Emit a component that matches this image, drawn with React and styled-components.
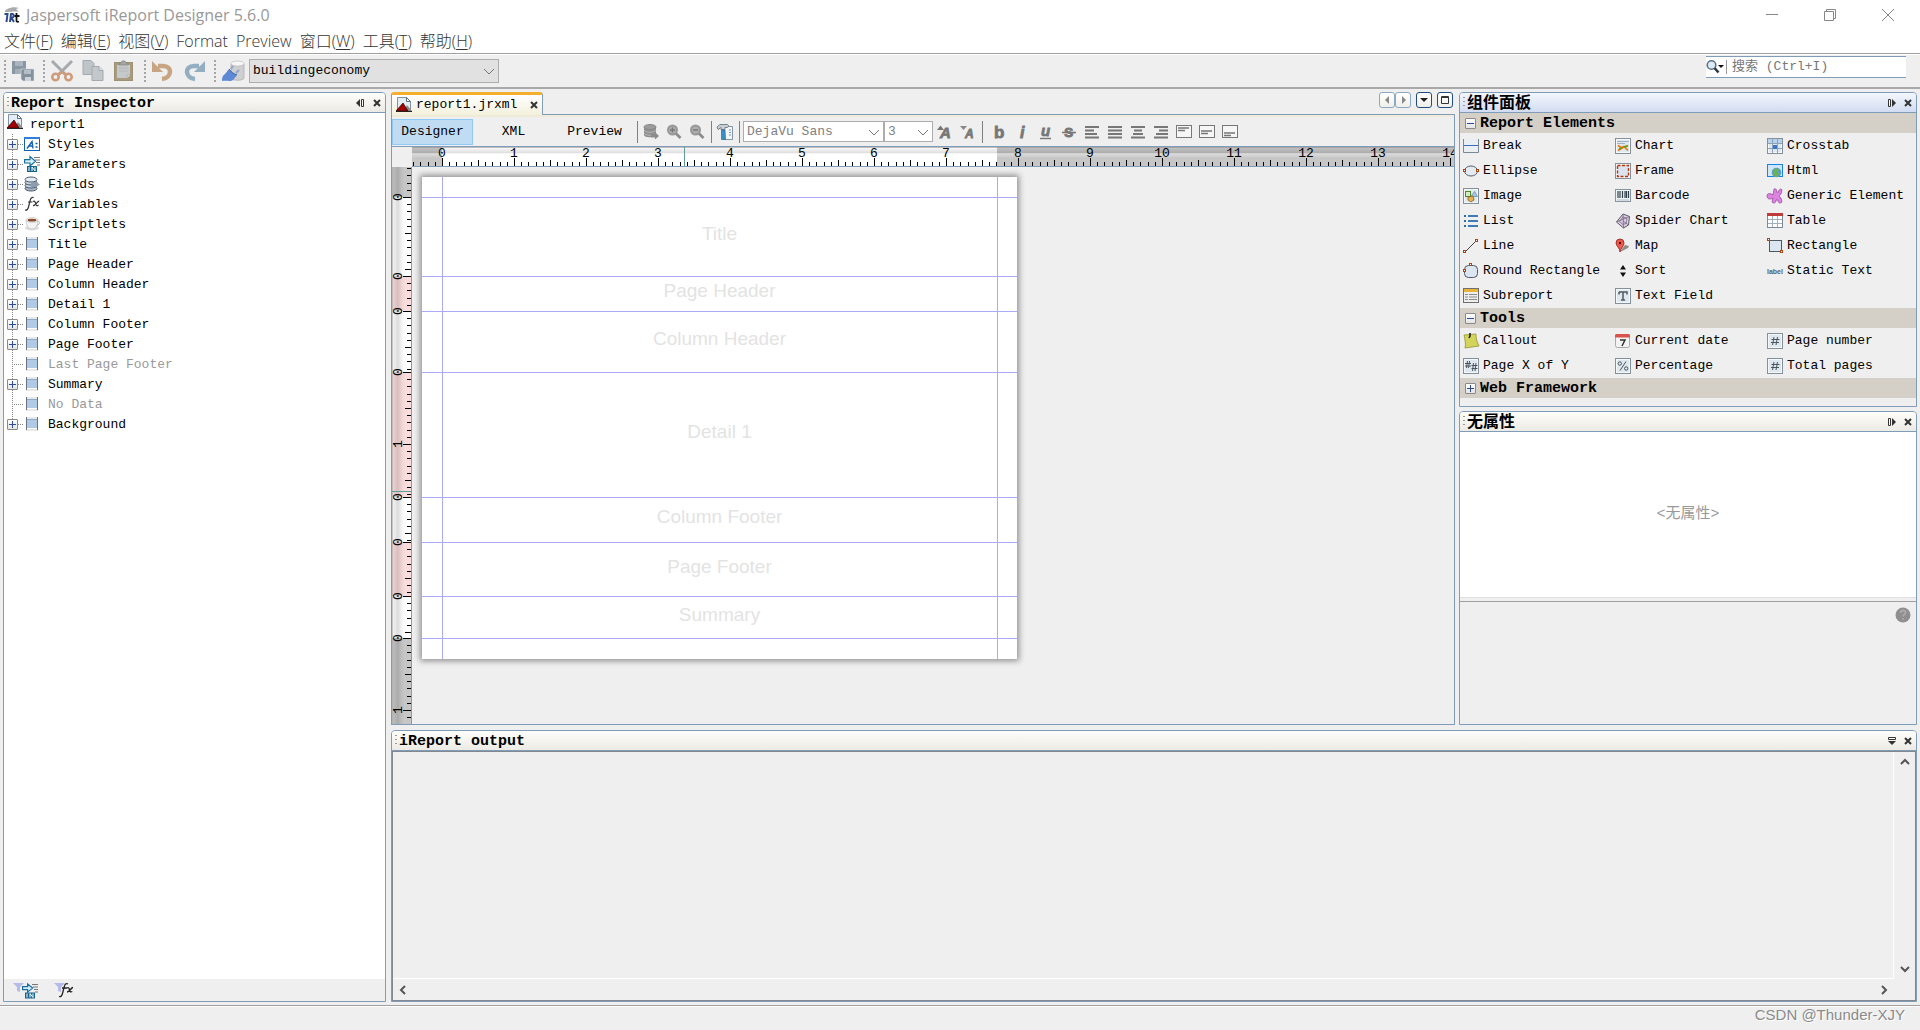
import React, { useEffect, useRef, useState } from 'react'
import styled, { createGlobalStyle, css } from 'styled-components'

const mono = `'Liberation Mono', 'Noto Sans CJK SC', monospace`
const ui = `'Open Sans', 'Noto Sans CJK SC', sans-serif`

const tile = (
  <>
    <rect x='0.5' y='0.5' width='15' height='15' fill='#dfe7ef' stroke='#84909c' />
    <rect x='1.5' y='1.5' width='13' height='13' fill='none' stroke='#f4f8fb' />
  </>
)
const handle = (x, y) => (
  <rect x={x + 0.5} y={y + 0.5} width='2' height='2' fill='#fff' stroke='#b0420c' />
)
const letter = (char, x, y, size, slant) => (
  <text
    x={x}
    y={y}
    fontSize={size}
    fontFamily='Liberation Sans'
    fontWeight='700'
    fontStyle={slant ? 'italic' : 'normal'}
    fill='#777'
    stroke='#777'
    strokeWidth='0.8'
  >
    {char}
  </text>
)

const icons = {
  report: (
    <>
      <path d='M1.5 0.5h9l4 4v10h-13z' fill='#e4edf5' stroke='#7f92a6' />
      <path d='M10.5 0.5v4h4z' fill='#fff' stroke='#5b6f84' />
      <path d='M8 14l3-6 5 6z' fill='#8b8b8b' />
      <path d='M0 14l7-8 5 8z' fill='#a30000' stroke='#1c0000' strokeWidth='0.7' />
      <path d='M0 14.5h16' stroke='#222' />
    </>
  ),
  styles: (
    <>
      <rect x='0.5' y='1.5' width='15' height='13' fill='#fff' stroke='#1160b8' />
      <rect x='0' y='1' width='16' height='2' fill='#2e80d8' />
      <path d='M3 12.500l5-7 1 7M4.500 10h4.500' fill='none' stroke='#0f5db0' strokeWidth='1.400' />
      <path d='M11.500 7.500h2M11.500 11h2' stroke='#0f5db0' strokeWidth='1.600' />
    </>
  ),
  params: (
    <>
      <path d='M10 1.500h6M11 4h5M12 6.500h4M13 9h3' stroke='#777' />
      <path d='M0.600 3.600h5.400v-3l5.500 4.700-5.500 4.700v-3h-5.400z' fill='#d5effc' stroke='#1a6e9e' strokeWidth='1.200' />
      <rect x='3' y='10' width='10' height='6' fill='#15648f' />
      <path d='M5 11v4M8 15v-4l3 4v-4' fill='none' stroke='#fff' />
    </>
  ),
  fields: (
    <>
      <ellipse cx='7' cy='12.500' rx='6' ry='2.500' fill='#a8b7c5' stroke='#4a5d70' />
      <ellipse cx='7' cy='9.500' rx='6' ry='2.500' fill='#c3cfda' stroke='#4a5d70' />
      <ellipse cx='7' cy='6.500' rx='6' ry='2.500' fill='#c3cfda' stroke='#4a5d70' />
      <ellipse cx='7' cy='3.500' rx='6' ry='2.500' fill='#e3eaf1' stroke='#4a5d70' />
      <path d='M7 6h5l4 2.500-4 2.500h-5' fill='#8c9dad' />
    </>
  ),
  fx: (
    <path
      d='M1 14c2 0.600 3-1 3.500-3l1.800-7c0.500-2.300 1.800-3 3.400-2.500M4 6h4.500M9 5.500c1.800-1 2.200 0.500 2.700 2.200s1 2.500 2.800 1.500M15.200 5.200c-2.200 0-3.200 4.500-6.200 4.500'
      fill='none'
      stroke='#333'
      strokeWidth='1.200'
    />
  ),
  cup: (
    <>
      <ellipse cx='8' cy='12' rx='7' ry='2.500' fill='#ddd' />
      <path d='M2 4c0 5 2 9 6 9s6-4 6-9z' fill='#f3f3f3' stroke='#bbb' strokeWidth='0.700' />
      <path d='M13.500 5c3 0 2.500 4-1 4.500' fill='none' stroke='#bbb' />
      <ellipse cx='8' cy='4' rx='6' ry='2.300' fill='#fff' stroke='#bbb' strokeWidth='0.700' />
      <ellipse cx='8' cy='4.200' rx='4.500' ry='1.400' fill='#8a4a2c' />
    </>
  ),
  band: (
    <>
      <rect x='2' y='1' width='12' height='14' fill='#e8e8e8' />
      <rect x='3' y='3' width='10' height='9' fill='#b0cae6' />
      <path d='M3 3.500h10' stroke='#8da9ca' />
      <path d='M3 12.500h10' stroke='#fff' />
      <path d='M2.500 1v13M13.500 1v13' stroke='#68717d' />
    </>
  ),
  break: (
    <>
      <path d='M0.500 1v13.500h15V1' fill='#e9eef3' stroke='#7b8794' />
      <path d='M1 7.500h14' stroke='#3a6cc0' />
    </>
  ),
  chart: (
    <>
      {tile}
      <path d='M2 3.500h12M2 5.500h8' stroke='#9fb2c4' />
      <path d='M3 7.500l3 2 3-1 4 4M3 12.500l5-3 5-2' fill='none' stroke='#e07a10' strokeWidth='1.600' />
      <path d='M4 11l3-1M9 9l4-1' stroke='#5aa515' strokeWidth='1.500' />
    </>
  ),
  crosstab: (
    <>
      {tile}
      <rect x='1' y='1' width='14' height='4' fill='#b8d2ee' />
      <path d='M1 5.500h14M1 10.500h14M5.500 1v14M10.500 1v14' stroke='#8fa3b8' />
      <rect x='6' y='7' width='4' height='4' fill='#3f74c4' />
    </>
  ),
  ellipse: (
    <>
      <ellipse cx='8' cy='8' rx='6.500' ry='5' fill='#e4ebf2' stroke='#555e68' />
      {handle(0, 6)}
      {handle(13, 6)}
    </>
  ),
  frame: (
    <>
      {tile}
      <rect x='2.500' y='2.500' width='11' height='11' fill='#d9e4ee' stroke='#c03408' strokeWidth='1.400' strokeDasharray='3 1.500' />
    </>
  ),
  html: (
    <>
      <rect x='0.500' y='1.500' width='15' height='12' fill='#cfe6f8' stroke='#1783e8' />
      <circle cx='9.500' cy='9.500' r='4.800' fill='#5f9ec4' />
      <path d='M6 8c2-3 5-3 6-1l-2 2 2 2-2 3c-3 0-3-2-4-3z' fill='#68b35a' />
    </>
  ),
  image: (
    <>
      {tile}
      <rect x='2.500' y='3.500' width='5' height='5' fill='#d9ebc6' stroke='#4c8a26' />
      <path d='M8 8.500l3.500-5 3 5z' fill='#a9c7e2' stroke='#5f86ab' strokeWidth='0.700' />
      <path d='M5 9l5-1 1 4-3 2-3-2z' fill='#e6b455' stroke='#7a5420' strokeWidth='0.700' />
    </>
  ),
  barcode: (
    <>
      <rect x='0.500' y='1.500' width='15' height='12' fill='#eef3f6' stroke='#86949f' />
      <path d='M3 3v7M5 3v7M7.500 3v7M10 3v7M11.500 3v7M13.500 3v7' stroke='#33414c' strokeWidth='1.200' />
      <path d='M2 12h12' stroke='#b5c0c9' />
    </>
  ),
  generic: (
    <path
      d='M7 1c2-1 3 1 2.500 3h2C12 1 14 0 15 2l-1 4c-2 1-2 3 0 4l1 4c-2 2-4 1-4-2H9c0 3-2 4-4 2l1-4c-3 2-6 1-6-2s3-3 6-1z'
      fill='#dc84e0'
      stroke='#8f3f97'
      strokeWidth='0.700'
    />
  ),
  list: (
    <>
      <path d='M1 3h2M1 8h2M1 13h2' stroke='#2f6aa5' strokeWidth='2' />
      <path d='M5 3h10M5 8h10M5 13h10' stroke='#3f7cb5' strokeWidth='2' />
    </>
  ),
  spider: (
    <>
      <path d='M8 1l6.500 2.500-1 8.500-5 3-7-6z' fill='#d9cfe0' stroke='#5d5a64' />
      <path d='M8 1l0.500 14M1.500 9l13-5.500M8 8l5.500 4M8 4l4 1.500-1 5-3 1-3.500-3z' fill='none' stroke='#7b6688' strokeWidth='0.800' />
    </>
  ),
  table: (
    <>
      <rect x='0.500' y='0.500' width='15' height='14' fill='#fff' stroke='#7d8a98' />
      <rect x='0' y='0' width='16' height='3' fill='#c03a3a' />
      <path d='M1 6.500h14M1 10.500h14M5.500 3v11M10.500 3v11' stroke='#9fb0c0' />
    </>
  ),
  line: (
    <>
      <path d='M2 14L14 2' stroke='#444' />
      {handle(0, 12)}
      {handle(12, 1)}
    </>
  ),
  map: (
    <>
      <path d='M5 14l5-7 4 1-1 2z' fill='#8c8c8c' />
      <path d='M5 14c0-4-4-6-4-9a4 4 0 0 1 8 0c0 3-3 5-4 9z' fill='#ee5a4c' stroke='#8e1d16' strokeWidth='0.800' />
      <circle cx='5' cy='5' r='1.200' fill='#5c0d0a' />
    </>
  ),
  rect: (
    <>
      <rect x='2.500' y='2.500' width='12' height='11' fill='#dbe6f0' stroke='#4d5863' />
      {handle(0, 0)}
      {handle(13, 12)}
    </>
  ),
  round: (
    <>
      <rect x='1.500' y='2.500' width='13' height='12' rx='4' fill='#dbe6f0' stroke='#4d5863' />
      {handle(0, 6)}
      {handle(6, 0)}
    </>
  ),
  sort: <path d='M5 6.500l3-4.500 3 4.500zM5 9.500h6l-3 4.500z' fill='#111' />,
  label: (
    <text x='0' y='11' fontSize='7' fontFamily='Liberation Sans' fontWeight='700' fill='#56606a'>
      label
    </text>
  ),
  subreport: (
    <>
      <rect x='0.500' y='0.500' width='15' height='14' fill='#eee' stroke='#6f6f6f' />
      <rect x='1' y='1' width='14' height='3' fill='#e8b438' />
      <path d='M2 6.500h3M6 6.500h8M2 9h3M6 9h8M2 11.500h3M6 11.500h8' stroke='#8a8a8a' />
    </>
  ),
  textfield: (
    <>
      {tile}
      <path d='M4 4h8v2.500M4 6.500V4M8 4v8M6 12h4' fill='none' stroke='#4e5a66' strokeWidth='1.500' />
    </>
  ),
  callout: (
    <>
      <path d='M1 2l12-1c0 5 1 8 3 12l-14 2c1-4 0-8-1-13z' fill='#d3d45c' stroke='#94952c' strokeWidth='0.800' />
      <path d='M7 0v3l-1 2' fill='none' stroke='#222' strokeWidth='1.600' />
    </>
  ),
  date: (
    <>
      <rect x='0.500' y='1.500' width='14' height='13' rx='2' fill='#f3f3f3' stroke='#aaa' />
      <path d='M0 4.500V3c0-2 1-2 2-2h11c1 0 2 0 2 2v1.500z' fill='#d9524c' />
      <path d='M5 7h5l-3 6' fill='none' stroke='#333' strokeWidth='1.500' />
    </>
  ),
  hash: (
    <>
      {tile}
      <path d='M7 4l-1.500 8M10.500 4L9 12M4.500 6.500h8M4 9.500h8' stroke='#4c565f' fill='none' />
    </>
  ),
  hashes: (
    <>
      {tile}
      <path d='M4.500 3l-1 7M6.500 3l-1 7M2 5.500h6M2 8h6M10.500 5l-1 8M13 5l-1 8M8.500 7.500h6M8.500 10.500h6' stroke='#4c565f' fill='none' />
    </>
  ),
  percent: (
    <>
      {tile}
      <path d='M11 3.500l-6 9' stroke='#4c565f' />
      <circle cx='4.800' cy='5.500' r='1.700' fill='none' stroke='#4c565f' />
      <circle cx='11.200' cy='10.500' r='1.700' fill='none' stroke='#4c565f' />
    </>
  ),
  app: (
    <>
      <path d='M1 4c2-3 9-5 14-3l-3 1 3 3c-4-1-8 0-14 0z' fill='#aaa' />
      <path d='M0.500 7h3l-1 8M6 15l1-8c3-1 4 3 0.500 4l2.500 4' fill='none' stroke='#2c4a8c' strokeWidth='2' />
      <path d='M12.500 6v7.500c0 1.500 1 1.500 2.500 1M10.500 9h5' fill='none' stroke='#111' strokeWidth='1.800' />
    </>
  ),
  filterParams: (
    <>
      <path d='M0 1h11l-4 4v5l-3-1V5z' fill='#b4bbea' />
      <g transform='translate(9 1)'>
        <path d='M10 1.500h6M11 4h5M12 6.500h4M13 9h3' stroke='#777' />
        <path d='M0.600 3.600h5v-2.500l5 4-5 4v-2.500h-5z' fill='#d5effc' stroke='#1a6e9e' strokeWidth='1.200' />
        <rect x='3' y='9.500' width='10' height='6' fill='#15648f' />
        <path d='M5 10.500v4M8 14.500v-4l3 4v-4' fill='none' stroke='#fff' />
      </g>
    </>
  ),
  filterFx: (
    <>
      <path d='M0 1h11l-4 4v5l-3-1V5z' fill='#b4bbea' />
      <path
        d='M5 14.500c2 0.600 3-1 3.500-3l1.800-7c0.500-2.300 1.800-3.500 3.700-2.500M8 6h5M13 6c1.800-1 2.200 0.500 2.500 2s1 2.500 2.800 1.500M19 5.500c-2.200 0-3 4.500-6 4.500'
        fill='none'
        stroke='#222'
        strokeWidth='1.300'
      />
    </>
  ),
  // main toolbar, drawn on a 22px grid
  saveAll: (
    <>
      <path d='M0 1h14v13H0z' fill='#8a97a3' />
      <path d='M3 1h8v5H3z' fill='#aab5bf' />
      <path d='M3 9h8v5H3z' fill='#a3aeb8' />
      <path d='M9 9h13v12H11l-2-2z' fill='#84919d' stroke='#dfe3e6' strokeWidth='0.600' />
      <path d='M12 10h7v4h-7z' fill='#b3bec7' />
      <path d='M13 17h6v4h-6z' fill='#cdd4d9' />
    </>
  ),
  cut: (
    <>
      <path d='M1 1l13 13M21 1L8 14' stroke='#a5aaae' strokeWidth='3' />
      <circle cx='4.500' cy='17' r='3.200' fill='none' stroke='#cd9c7d' strokeWidth='2.600' />
      <circle cx='17.500' cy='17' r='3.200' fill='none' stroke='#cd9c7d' strokeWidth='2.600' />
      <path d='M7 15l4-3 4 3' fill='none' stroke='#cd9c7d' strokeWidth='2.500' />
    </>
  ),
  copy: (
    <>
      <path d='M1 0.500h8l3 3v11H1z' fill='#bfc4c8' stroke='#a3a9ae' />
      <path d='M10 6.500h7l4 4v10H10z' fill='#c3c8cc' stroke='#a3a9ae' />
      <path d='M17 6.500v4h4' fill='#e2e5e7' stroke='#a3a9ae' />
    </>
  ),
  paste: (
    <>
      <rect x='1.500' y='2.500' width='18' height='18' fill='#a99c7e' stroke='#9c9075' />
      <path d='M4 5h13v10l-3 3H4z' fill='#c6c9cb' />
      <path d='M14 18v-3h3' fill='#efefef' stroke='#999' strokeWidth='0.700' />
      <path d='M6 5V3h2c0-3 5-3 5 0h2v2z' fill='#a6a6a0' stroke='#85857f' strokeWidth='0.700' />
      <path d='M6 8h9M6 11h9' stroke='#b4b8bb' />
    </>
  ),
  undo: (
    <>
      <path d='M6 6h5c10 0 9 12-1 13' fill='none' stroke='#c8a582' strokeWidth='4.500' />
      <path d='M0 1v11h11z' fill='#c8a582' />
    </>
  ),
  redo: (
    <>
      <path d='M16 6h-5c-10 0-9 12 1 13' fill='none' stroke='#93aec0' strokeWidth='4.500' />
      <path d='M22 1v11H11z' fill='#93aec0' />
    </>
  ),
  datasource: (
    <>
      <path d='M9 4v14c0 3 13 3 13 0V4z' fill='#cfcfcf' stroke='#aaa' strokeWidth='0.700' />
      <ellipse cx='15.500' cy='3.500' rx='6.500' ry='2.500' fill='#f7f7f7' stroke='#bbb' strokeWidth='0.700' />
      <path d='M0 21c0-4 1-6 3-7l4-5c2 3 5 5 8 6l-4 5c-3 2-6 0-11 1z' fill='#5c88d4' />
      <path d='M7 9c2 3 5 5 8 6' fill='none' stroke='#3c62ab' />
      <path d='M9 9l2-3M14 13l3-3' stroke='#8ea4c8' strokeWidth='2' />
    </>
  ),
  // editor toolbar
  dbGray: (
    <>
      <path d='M1 3v8c0 3 11 3 12 0V3z' fill='#8f8f8f' />
      <ellipse cx='7' cy='3' rx='6' ry='2.500' fill='#9c9c9c' stroke='#888' />
      <path d='M1 6c1 3 11 3 12 0M1 9c1 3 11 3 12 0' fill='none' stroke='#b5b5b5' />
      <path d='M8 10h4v-2l4 4-4 3.500v-2H8z' fill='#8c8c8c' />
    </>
  ),
  zoomIn: (
    <>
      <circle cx='6.500' cy='6' r='4.500' fill='#adadad' stroke='#979797' strokeWidth='2' />
      <path d='M10 9.500l4.500 4.500' stroke='#8b8b8b' strokeWidth='2.600' />
      <path d='M4 6h5M6.500 3.500v5' stroke='#777' strokeWidth='1.400' />
    </>
  ),
  zoomOut: (
    <>
      <circle cx='6.500' cy='6' r='4.500' fill='#adadad' stroke='#979797' strokeWidth='2' />
      <path d='M10 9.500l4.500 4.500' stroke='#8b8b8b' strokeWidth='2.600' />
      <path d='M4 6h5' stroke='#777' strokeWidth='1.400' />
    </>
  ),
  hammer: (
    <>
      <path d='M6.500 2.500h9v13h-9z' fill='#f4f7fa' stroke='#8294a6' />
      <path d='M12 6h2M12 8.500h2M12 11h2' stroke='#8294a6' />
      <path d='M0 3l3-2.500h7c2 0 2 3 0 3H8v2H4v-2l-3 2z' fill='#c9d0d6' stroke='#5f6b76' strokeWidth='0.800' />
      <path d='M4.500 6h3.500l0.500 9.500h-4z' fill='#3d8fc8' stroke='#2a6a9a' strokeWidth='0.700' />
    </>
  ),
  fontUp: (
    <>
      {letter('A', 3, 14, 15, true)}
      <path d='M0 6l3.500-4.500L7 6z' fill='#777' />
    </>
  ),
  fontDown: (
    <>
      {letter('A', 5, 14, 12, true)}
      <path d='M0 2h7L3.500 6z' fill='#888' />
    </>
  ),
  bold: letter('b', 2, 14, 17),
  italic: letter('i', 5, 14, 16, true),
  underline: (
    <>
      {letter('u', 3, 12, 15, true)}
      <path d='M2 14.500h11' stroke='#777' strokeWidth='1.400' />
    </>
  ),
  strike: (
    <>
      {letter('s', 3, 13, 17)}
      <path d='M1 8.500h14' stroke='#777' strokeWidth='1.600' />
    </>
  ),
  alignLeft: <path d='M1 3h14M1 6.500h9M1 10h12M1 13.500h14' stroke='#777' strokeWidth='2' />,
  alignJustify: <path d='M1 3h14M1 6.500h14M1 10h14M1 13.500h14' stroke='#777' strokeWidth='2' />,
  alignCenter: <path d='M1 3h14M4 6.500h8M3 10h10M1 13.500h14' stroke='#777' strokeWidth='2' />,
  alignRight: <path d='M1 3h14M6 6.500h9M3 10h12M1 13.500h14' stroke='#777' strokeWidth='2' />,
  boxTop: (
    <>
      <rect x='0.500' y='1.500' width='15' height='12' fill='#f6f6f6' stroke='#777' />
      <path d='M2 4h11M2 6.500h7' stroke='#777' strokeWidth='1.500' />
    </>
  ),
  boxMiddle: (
    <>
      <rect x='0.500' y='1.500' width='15' height='12' fill='#f6f6f6' stroke='#777' />
      <path d='M2 7h11M2 9.500h7' stroke='#777' strokeWidth='1.500' />
    </>
  ),
  boxBottom: (
    <>
      <rect x='0.500' y='1.500' width='15' height='12' fill='#f6f6f6' stroke='#777' />
      <path d='M2 9h11M2 11.500h7' stroke='#777' strokeWidth='1.500' />
    </>
  ),
  // window and panel controls
  winMin: <path d='M2 7.500h12' stroke='#888' />,
  winMax: <path d='M2.500 4.500h9v9h-9zM4.500 4.500v-2h9v9h-2' fill='none' stroke='#888' />,
  winClose: <path d='M2 2l12 12M14 2L2 14' stroke='#888' />,
  slideLeft: (
    <>
      <path d='M7 4v8L3 8z' fill='#333' />
      <path d='M8.500 4.500h2v7h-2z' fill='#fff' stroke='#333' />
    </>
  ),
  slideRight: (
    <>
      <path d='M4.500 4.500h2v7h-2z' fill='#fff' stroke='#333' />
      <path d='M8 4v8l4-4z' fill='#333' />
    </>
  ),
  slideDown: (
    <>
      <path d='M4.500 4.500h7v2h-7z' fill='#fff' stroke='#333' />
      <path d='M4 8h8l-4 4z' fill='#333' />
    </>
  ),
  close: <path d='M5 5l6 6M11 5l-6 6' stroke='#333' strokeWidth='2' />,
  triLeft: <path d='M9 4v8L5 8z' fill='#888' />,
  triRight: <path d='M6 4v8l4-4z' fill='#888' />,
  triDown: <path d='M3 5h8l-4 4z' fill='#222' />,
  maximize: <path d='M3.500 3.500h7v7h-7zM3.500 4.500h7' fill='none' stroke='#333' />,
  chevronUp: <path d='M4 10l4-4 4 4' fill='none' stroke='#555' strokeWidth='2' />,
  chevronDown: <path d='M4 6l4 4 4-4' fill='none' stroke='#555' strokeWidth='2' />,
  chevronLeft: <path d='M10 4L6 8l4 4' fill='none' stroke='#555' strokeWidth='2' />,
  chevronRight: <path d='M6 4l4 4-4 4' fill='none' stroke='#555' strokeWidth='2' />,
  comboArrow: <path d='M3 6l5 5 5-5' fill='none' stroke='#777' />,
  search: (
    <>
      <circle cx='5.500' cy='6' r='4.300' fill='#dcebf8' stroke='#5d7286' strokeWidth='1.600' />
      <path d='M8.500 9l4 4.500' stroke='#2f3740' strokeWidth='2.600' />
      <path d='M12 6h6l-3 3z' fill='#111' />
    </>
  ),
  help: (
    <>
      <circle cx='8' cy='8' r='7.500' fill='#8f8f8f' />
      <path d='M5.500 6c0-3.500 5-3 5-0.500 0 2-2.500 2-2.500 4M8 11v1.800' fill='none' stroke='#aaa' strokeWidth='1.800' />
    </>
  ),
}

const Icon = ({ name, w = 16, h = 16 }) => (
  <Svg width={w} height={h} viewBox={`0 0 ${w} ${h}`} aria-hidden='true'>
    {icons[name]}
  </Svg>
)

const menus = [
  ['文件', 'F'], ['编辑', 'E'], ['视图', 'V'], ['Format'],
  ['Preview'], ['窗口', 'W'], ['工具', 'T'], ['帮助', 'H'],
]

const tree = [
  ['Styles', 'styles'], ['Parameters', 'params'], ['Fields', 'fields'],
  ['Variables', 'fx'], ['Scriptlets', 'cup'], ['Title'], ['Page Header'],
  ['Column Header'], ['Detail 1'], ['Column Footer'], ['Page Footer'],
  ['Last Page Footer', 'band', true], ['Summary'], ['No Data', 'band', true],
  ['Background'],
]

const elements = [
  ['Break', 'break'], ['Chart', 'chart'], ['Crosstab', 'crosstab'],
  ['Ellipse', 'ellipse'], ['Frame', 'frame'], ['Html', 'html'],
  ['Image', 'image'], ['Barcode', 'barcode'], ['Generic Element', 'generic'],
  ['List', 'list'], ['Spider Chart', 'spider'], ['Table', 'table'],
  ['Line', 'line'], ['Map', 'map'], ['Rectangle', 'rect'],
  ['Round Rectangle', 'round'], ['Sort', 'sort'], ['Static Text', 'label'],
  ['Subreport', 'subreport'], ['Text Field', 'textfield'],
]

const tools = [
  ['Callout', 'callout'], ['Current date', 'date'], ['Page number', 'hash'],
  ['Page X of Y', 'hashes'], ['Percentage', 'percent'], ['Total pages', 'hash'],
]

const bands = [
  ['Title', 79], ['Page Header', 35], ['Column Header', 61], ['Detail 1', 125],
  ['Column Footer', 45], ['Page Footer', 54], ['Summary', 42],
]

const textTools = [
  'bold', 'italic', 'underline', 'strike', 'alignLeft', 'alignJustify',
  'alignCenter', 'alignRight', 'boxTop', 'boxMiddle', 'boxBottom',
]

const INCH = 72
const MARGIN = 20
const PAGE_WIDTH = 595

const ticks = (length) => {
  const out = []
  for (let i = 0; (i * INCH) / 10 < length; i++) {
    const at = Math.round((i * INCH) / 10)
    const whole = i % 10 === 0 && (i === 0 || length - at > 10)
    out.push({ at, size: whole ? 8 : i % 5 === 0 ? 6 : 4, label: whole ? i / 10 : null })
  }
  return out
}

// rulers only draw the inches that fit in their cell
const useSize = () => {
  const ref = useRef(null)
  const [size, setSize] = useState({ width: 0, height: 0 })
  useEffect(() => {
    const observer = new ResizeObserver(([entry]) => {
      const { width, height } = entry.contentRect
      setSize({ width, height })
    })
    observer.observe(ref.current)
    return () => observer.disconnect()
  }, [])
  return [ref, size]
}

const TopRuler = () => {
  const [ref, { width }] = useSize()
  const zero = 10 + MARGIN
  const marks = ticks(width - zero + 12).filter(t => zero + t.at < width)
  return (
    <TopCell ref={ref}>
      <Svg width={width} height='19'>
        <defs>
          <linearGradient id='shineH' x1='0' y1='0' x2='0' y2='1'>
            <stop offset='0' stopColor='#fff' />
            <stop offset='0.1' stopColor='#000' stopOpacity='0.03' />
            <stop offset='0.5' stopColor='#000' stopOpacity='0.12' />
            <stop offset='0.6' stopColor='#fff' stopOpacity='0.4' />
            <stop offset='1' stopColor='#fff' stopOpacity='0' />
          </linearGradient>
        </defs>
        <rect width='100%' height='19' fill='#c6c6c6' />
        <rect x={zero} width={PAGE_WIDTH - 2 * MARGIN} height='19' fill='#fff' />
        <rect width='100%' height='11' fill='url(#shineH)' />
        {marks.map(t => (
          <rect key={t.at} x={zero + t.at} y={19 - t.size} width='1' height={t.size} fill='#000' />
        ))}
        {[1, 2, 3, 4].map(n => (
          <rect key={n} x={zero - Math.round(n * 7.2)} y='15' width='1' height='4' fill='#000' />
        ))}
        {marks.filter(t => t.label !== null).map(t => (
          <RulerText key={t.label} x={zero + t.at} y='10' textAnchor='middle'>{t.label}</RulerText>
        ))}
        <rect x='272' width='1' height='19' fill='#5f9c98' />
      </Svg>
    </TopCell>
  )
}

const SideRuler = () => {
  const [ref, { height }] = useSize()
  let y = 10 + MARGIN
  const parts = bands.map(([name, size], i) => {
    const part = { name, size, y, fill: i % 2 === 1 ? '#fadcdc' : '#fff' }
    y += size
    return part
  })
  parts.push({ name: 'end', size: Math.max(0, height - y), y, fill: '#c6c6c6' })
  return (
    <SideCell ref={ref}>
      <Svg width='19' height={height}>
        <defs>
          <linearGradient id='shineV' x1='0' y1='0' x2='1' y2='0'>
            <stop offset='0' stopColor='#fff' />
            <stop offset='0.1' stopColor='#000' stopOpacity='0.06' />
            <stop offset='0.4' stopColor='#000' stopOpacity='0.14' />
            <stop offset='1' stopColor='#fff' stopOpacity='0' />
          </linearGradient>
        </defs>
        <rect width='19' height='100%' fill='#c6c6c6' />
        {parts.map(p => <rect key={p.name} y={p.y} width='19' height={p.size} fill={p.fill} />)}
        <rect width='15' height='100%' fill='url(#shineV)' />
        {[1, 2, 3, 4].map(n => (
          <rect key={n} x='15' y={30 - Math.round(n * 7.2)} width='4' height='1' fill='#000' />
        ))}
        {parts.map(p => (
          <g key={p.name} transform={`translate(0 ${p.y})`}>
            {ticks(p.size).map(t => (
              <React.Fragment key={t.at}>
                <rect x={19 - t.size} y={t.at} width={t.size} height='1' fill='#000' />
                {t.label !== null && (
                  <RulerText transform={`translate(10 ${t.at}) rotate(-90)`} textAnchor='middle'>{t.label}</RulerText>
                )}
              </React.Fragment>
            ))}
          </g>
        ))}
        <rect y='324' width='19' height='1' fill='#5f9c98' />
      </Svg>
    </SideCell>
  )
}

const PanelHead = ({ title, slide, active, cjk }) => (
  <Head $active={active}>
    <Dots />
    <HeadTitle $cjk={cjk}>{title}</HeadTitle>
    <IconButton aria-label='minimize'><Icon name={slide} /></IconButton>
    <IconButton aria-label='close'><Icon name='close' /></IconButton>
  </Head>
)

const Palette = ({ items }) => (
  <PaletteGrid>
    {items.map(([label, icon]) => (
      <PaletteItem key={label}>
        <Icon name={icon} />
        {label}
      </PaletteItem>
    ))}
  </PaletteGrid>
)

const ToolButtons = ({ names, size = 16 }) =>
  names.map(n => <IconButton key={n} aria-label={n}><Icon name={n} w={size} h={size} /></IconButton>)

const EditorTools = () => (
  <EditorBar>
    <ViewButton $active>Designer</ViewButton>
    <ViewButton>XML</ViewButton>
    <ViewButton>Preview</ViewButton>
    <Rule />
    <ToolGroup><ToolButtons names={['dbGray', 'zoomIn', 'zoomOut']} /></ToolGroup>
    <Rule />
    <ToolGroup><ToolButtons names={['hammer']} /></ToolGroup>
    <Rule />
    <Combos>
      <SelectBox $w='141px'>
        <select aria-label='font' disabled><option>DejaVu Sans</option></select>
        <Icon name='comboArrow' />
      </SelectBox>
      <SelectBox $w='49px'>
        <select aria-label='font size' disabled><option>3</option></select>
        <Icon name='comboArrow' />
      </SelectBox>
    </Combos>
    <ToolGroup><ToolButtons names={['fontUp', 'fontDown']} /></ToolGroup>
    <Rule />
    <ToolGroup $wide><ToolButtons names={textTools} /></ToolGroup>
  </EditorBar>
)

const App = () => (
  <>
    <GlobalStyle />
    <Shell>
      <TitleBar>
        <Icon name='app' />
        <WindowTitle>Jaspersoft iReport Designer 5.6.0</WindowTitle>
        <WindowButtons><ToolButtons names={['winMin', 'winMax', 'winClose']} /></WindowButtons>
      </TitleBar>
      <MenuBar>
        {menus.map(([label, key]) => (
          <MenuButton key={label}>{label}{key && <>(<u>{key}</u>)</>}</MenuButton>
        ))}
      </MenuBar>
      <MainToolbar>
        <Grip />
        <MainGroup><ToolButtons names={['saveAll']} size={22} /></MainGroup>
        <Grip />
        <MainGroup><ToolButtons names={['cut', 'copy', 'paste']} size={22} /></MainGroup>
        <Grip />
        <MainGroup><ToolButtons names={['undo', 'redo']} size={22} /></MainGroup>
        <Grip />
        <MainGroup $tight><ToolButtons names={['datasource']} size={22} /></MainGroup>
        <SelectBox $w='250px' $main>
          <select aria-label='datasource'><option>buildingeconomy</option></select>
          <Icon name='comboArrow' />
        </SelectBox>
        <SearchBox>
          <Icon name='search' w={18} h={16} />
          <SearchRule />
          <input aria-label='搜索' placeholder='搜索 (Ctrl+I)' />
        </SearchBox>
      </MainToolbar>

      <Workspace>
        <Panel>
          <PanelHead title='Report Inspector' slide='slideLeft' />
          <Tree>
            <RootNode><Icon name='report' />report1</RootNode>
            {tree.map(([label, icon, off], i) => (
              <TreeRow key={label} $off={off}>
                <Guide $last={i === tree.length - 1}>{!off && <Expander aria-label={`expand ${label}`} $plus />}</Guide>
                <Icon name={icon || 'band'} />
                <span>{label}</span>
              </TreeRow>
            ))}
          </Tree>
          <InspectorFoot>
            <IconButton aria-label='filter parameters'><Icon name='filterParams' w={25} h={17} /></IconButton>
            <IconButton aria-label='filter variables'><Icon name='filterFx' w={20} h={17} /></IconButton>
          </InspectorFoot>
        </Panel>

        <Right>
          <Upper>
            <Editor>
              <TabRow>
                <FileTab>
                  <Icon name='report' />
                  report1.jrxml
                  <IconButton aria-label='close tab'><Icon name='close' /></IconButton>
                </FileTab>
                <TabButtons>
                  <Pair>
                    <TabButton aria-label='previous'><Icon name='triLeft' w={14} /></TabButton>
                    <TabButton aria-label='next'><Icon name='triRight' w={14} /></TabButton>
                  </Pair>
                  <TabButton $dark aria-label='documents'><Icon name='triDown' w={14} h={14} /></TabButton>
                  <TabButton $dark aria-label='maximize'><Icon name='maximize' w={14} h={14} /></TabButton>
                </TabButtons>
              </TabRow>
              <EditorBody>
                <EditorTools />
                <Design>
                  <Corner />
                  <TopRuler />
                  <SideRuler />
                  <Canvas>
                    <Page>
                      <PageMargin />
                      {bands.map(([name, size]) => <Band key={name} style={{ height: size }}>{name}</Band>)}
                      <PageMargin $last />
                    </Page>
                  </Canvas>
                </Design>
              </EditorBody>
            </Editor>

            <Side>
              <Panel>
                <PanelHead title='组件面板' slide='slideRight' active cjk />
                <Category><Expander aria-label='collapse' /><span>Report Elements</span></Category>
                <Palette items={elements} />
                <Category><Expander aria-label='collapse' /><span>Tools</span></Category>
                <Palette items={tools} />
                <Category><Expander aria-label='expand' $plus /><span>Web Framework</span></Category>
                <PaletteEnd />
              </Panel>
              <Panel $grow>
                <PanelHead title='无属性' slide='slideRight' cjk />
                <NoProps>&lt;无属性&gt;</NoProps>
                <PropsHelp>
                  <IconButton aria-label='help'><Icon name='help' /></IconButton>
                </PropsHelp>
              </Panel>
            </Side>
          </Upper>

          <Panel>
            <PanelHead title='iReport output' slide='slideDown' />
            <Output>
              <OutputText aria-label='iReport output' readOnly />
              <VScroll><ToolButtons names={['chevronUp', 'chevronDown']} /></VScroll>
              <HScroll><ToolButtons names={['chevronLeft', 'chevronRight']} /></HScroll>
            </Output>
          </Panel>
        </Right>
      </Workspace>
      <StatusBar>CSDN @Thunder-XJY</StatusBar>
    </Shell>
  </>
)

export default App

const GlobalStyle = createGlobalStyle`
  * {
    box-sizing: border-box;
  }

  body {
    margin: 0;
    background: #efefef;
    color: #000;
    font: 13px/20px ${mono};
  }

  button, input, select, textarea {
    font: inherit;
    color: inherit;
    margin: 0;
    padding: 0;
    border: 0;
    background: none;
  }
`

const Svg = styled.svg`
  display: block;
  flex: none;
  overflow: visible;
`

const Shell = styled.div`
  display: flex;
  flex-direction: column;
  min-height: 100vh;
`

const TitleBar = styled.header`
  display: flex;
  align-items: center;
  height: 29px;
  padding: 0 20px 0 4px;
  background: #fff;
`

const WindowTitle = styled.div`
  flex: 1;
  padding-left: 6px;
  color: #999;
  font: 16px/24px ${ui};
`

const IconButton = styled.button`
  display: flex;
  align-items: center;
  justify-content: center;
`

const WindowButtons = styled.div`
  display: flex;
  gap: 42px;
  padding-right: 4px;
`

const MenuBar = styled.nav`
  display: flex;
  gap: 8px;
  height: 24px;
  padding-left: 4px;
  background: #fff;
`

const MenuButton = styled.button`
  color: #333;
  font: 300 16px/24px ${ui};

  u {
    text-underline-offset: 2px;
  }
`

const MainToolbar = styled.div`
  display: flex;
  align-items: center;
  height: 36px;
  padding: 0 14px 0 4px;
  border-top: 1px solid #a0a0a0;
  border-bottom: 2px solid #a9a9a9;
  box-shadow: inset 0 1px #fff;
`

const Grip = styled.div`
  width: 2px;
  height: 22px;
  background: repeating-linear-gradient(#a5a5a5 0 2px, transparent 2px 4px);
`

const MainGroup = styled.div`
  display: flex;
  gap: 9px;
  padding: 0 ${p => (p.$tight ? '5px' : '9px')} 0 6px;
`

const SelectBox = styled.div`
  display: flex;
  align-items: center;
  position: relative;
  width: ${p => p.$w};
  height: ${p => (p.$main ? '24px' : '21px')};
  border: 1px solid #adadad;
  background: ${p => (p.$main ? '#e1e1e1' : '#fff')};

  select {
    width: 100%;
    height: 100%;
    padding-left: 3px;
    appearance: none;
    opacity: 1;
    color: ${p => (p.$main ? '#000' : '#808080')};
  }

  svg {
    position: absolute;
    right: 1px;
    pointer-events: none;
  }
`

const SearchBox = styled.label`
  display: flex;
  align-items: center;
  align-self: flex-start;
  width: 200px;
  height: 22px;
  margin-top: 2px;
  margin-left: auto;
  border-top: 1px solid #7f9db9;
  border-bottom: 1px solid #7f9db9;
  background: #fff;

  input {
    flex: 1;
    min-width: 0;
    outline: 0;
  }

  input::placeholder {
    color: #777;
  }
`

const SearchRule = styled.span`
  width: 1px;
  height: 14px;
  margin: 0 5px 0 2px;
  background: #999;
`

const Workspace = styled.main`
  flex: 1;
  display: grid;
  grid-template-columns: 383px minmax(0, 1fr);
  gap: 5px;
  padding: 3px;
`

const Right = styled.div`
  display: grid;
  grid-template-rows: minmax(0, 1fr) 272px;
  gap: 5px;
`

const Upper = styled.div`
  display: grid;
  grid-template-columns: minmax(0, 1fr) 458px;
  gap: 4px;
`

const Side = styled.aside`
  display: flex;
  flex-direction: column;
  gap: 4px;
`

const Panel = styled.section`
  display: flex;
  flex-direction: column;
  flex: ${p => (p.$grow ? 1 : 'none')};
  min-width: 0;
  border: 1px solid #7f9db9;
  border-radius: 4px 4px 0 0;
`

const Head = styled.div`
  display: flex;
  align-items: center;
  height: 20px;
  padding-left: 3px;
  border-bottom: 1px solid #7f9db9;
  border-radius: 3px 3px 0 0;
  background: ${p => (p.$active ? 'linear-gradient(#f3f6fd, #d2dcf2)' : 'linear-gradient(#fefefa, #eceae4)')};
`

const HeadTitle = styled.h2`
  flex: 1;
  margin: 0;
  padding: 3px 0 0 2px;
  font-size: ${p => (p.$cjk ? '16px' : '15px')};
  line-height: 18px;
`

const Dots = styled.span`
  width: 2px;
  height: 12px;
  background: repeating-linear-gradient(#999 0 1px, transparent 1px 4px);
`

const Tree = styled.ul`
  flex: 1;
  margin: 0;
  padding: 1px 0 0 3px;
  list-style: none;
  background: #fff;
`

const RootNode = styled.li`
  display: flex;
  gap: 7px;
  height: 20px;
  line-height: 22px;
`

const TreeRow = styled.li`
  display: flex;
  align-items: center;
  height: 20px;
  color: ${p => (p.$off ? '#999' : '#000')};

  span {
    padding: 2px 0 0 8px;
  }
`

const Guide = styled.div`
  display: flex;
  align-items: center;
  width: 17px;
  height: 20px;
  background:
    repeating-linear-gradient(#888 0 1px, transparent 1px 2px) 5px 0 / 1px ${p => (p.$last ? '10px' : '20px')} no-repeat,
    repeating-linear-gradient(90deg, #888 0 1px, transparent 1px 2px) 5px 10px / 12px 1px no-repeat;
`

const Expander = styled.button`
  flex: none;
  width: 11px;
  height: 11px;
  border: 1px solid #8a8a8a;
  border-radius: 1px;
  background:
    linear-gradient(#2c4b9c, #2c4b9c) center / 7px 1px no-repeat,
    ${p => p.$plus && css`linear-gradient(#2c4b9c, #2c4b9c) center / 1px 7px no-repeat,`}
    linear-gradient(#fff, #e4e4e4);
`

const InspectorFoot = styled.div`
  display: flex;
  gap: 16px;
  height: 22px;
  padding-left: 9px;
`

const Editor = styled.section`
  display: flex;
  flex-direction: column;
  min-width: 0;
`

const TabRow = styled.div`
  display: flex;
  justify-content: space-between;
  height: 23px;
  box-shadow: inset 0 -1px #7f9db9;
`

const FileTab = styled.div`
  display: flex;
  align-items: center;
  gap: 4px;
  width: 152px;
  padding-left: 4px;
  border: 1px solid #7f9db9;
  border-top: 3px solid #f4b02c;
  border-bottom: 0;
  border-radius: 3px 3px 0 0;
  background: linear-gradient(#fff, #f3f0dc);

  button {
    margin-left: auto;
  }
`

const TabButtons = styled.div`
  display: flex;
  gap: 5px;
  height: 16px;
  padding-right: 2px;
`

const Pair = styled.div`
  display: flex;
`

const TabButton = styled.button`
  display: flex;
  align-items: center;
  justify-content: center;
  width: 16px;
  height: 16px;
  border: 1px solid ${p => (p.$dark ? '#1c4f86' : '#8aa9c6')};
  border-radius: 3px;
  background: linear-gradient(#fff, #f0efe9);
`

const EditorBody = styled.div`
  flex: 1;
  display: flex;
  flex-direction: column;
  border: 1px solid #7f9db9;
  border-top: 0;
`

const EditorBar = styled.div`
  display: flex;
  align-items: center;
  height: 32px;
  border-top: 2px solid #f0ebd8;
  border-bottom: 1px solid #7f9db9;
`

const ViewButton = styled.button`
  width: 81px;
  height: 26px;
  border: 1px solid ${p => (p.$active ? '#90c8f6' : 'transparent')};
  background: ${p => (p.$active ? '#c0dcf3' : 'transparent')};
`

const Rule = styled.span`
  width: 1px;
  height: 22px;
  margin: 0 1px 0 2px;
  background: #808080;
`

const ToolGroup = styled.div`
  display: flex;
  gap: 7px;
  padding: 0 ${p => (p.$wide ? '8px' : '4px')};
`

const Combos = styled.div`
  display: flex;
  padding-left: 2px;
`

const Design = styled.div`
  flex: 1;
  display: grid;
  grid-template-columns: 20px minmax(0, 1fr);
  grid-template-rows: 20px minmax(0, 1fr);
`

const Corner = styled.div`
  background: #efefef;
`

const TopCell = styled.div`
  min-width: 0;
  overflow-x: clip;
  border-bottom: 1px solid #7f9db9;
`

const SideCell = styled.div`
  min-height: 0;
  contain: size;
  border-right: 1px solid #7f9db9;
`

const RulerText = styled.text`
  font: 13px 'Liberation Mono', monospace;
`

const Canvas = styled.div`
  padding: 10px;
`

const Page = styled.div`
  width: ${PAGE_WIDTH}px;
  background:
    linear-gradient(#aaaaf8, #aaaaf8) ${MARGIN}px 0 / 1px 100% no-repeat,
    linear-gradient(#aaaaf8, #aaaaf8) right ${MARGIN - 1}px top / 1px 100% no-repeat,
    #fff;
  box-shadow: 0 0 6px 2px rgba(0, 0, 0, 0.4);
`

const PageMargin = styled.div`
  height: ${p => (p.$last ? '21px' : '20px')};
  border-top: ${p => (p.$last ? '1px solid #aaaaf8' : '0')};
`

const Band = styled.div`
  display: flex;
  align-items: center;
  justify-content: center;
  padding-bottom: 6px;
  border-top: 1px solid #aaaaf8;
  color: #e3e3e3;
  font: 19px/22px 'Liberation Sans', sans-serif;
`

const Category = styled.h3`
  display: flex;
  align-items: center;
  gap: 4px;
  height: 20px;
  margin: 0;
  padding-left: 5px;
  background: #d4cfc7;
  font-size: 15px;

  span {
    padding-top: 2px;
  }
`

const PaletteGrid = styled.div`
  display: grid;
  grid-template-columns: 1fr 1fr 149px;
  grid-auto-rows: 25px;
  padding-left: 3px;
`

const PaletteItem = styled.button`
  display: flex;
  align-items: center;
  gap: 4px;
  white-space: nowrap;
`

const PaletteEnd = styled.div`
  height: 8px;
`

const NoProps = styled.div`
  flex: 1;
  display: flex;
  align-items: center;
  justify-content: center;
  border-bottom: 1px solid #e0e0e0;
  background: #fff;
  color: #999;
  font-size: 15px;
`

const PropsHelp = styled.div`
  display: flex;
  justify-content: flex-end;
  align-items: flex-start;
  height: 123px;
  margin-top: 3px;
  padding: 5px;
  border-top: 1px solid #a0a0a0;
`

const Output = styled.div`
  flex: 1;
  display: grid;
  grid-template-columns: minmax(0, 1fr) 21px;
  grid-template-rows: minmax(0, 1fr) 21px;
  border: 1px solid #828790;
`

const OutputText = styled.textarea`
  width: 100%;
  height: 100%;
  resize: none;
  outline: 0;
  border-right: 1px solid #fff;
  border-bottom: 1px solid #fff;
`

const VScroll = styled.div`
  display: flex;
  flex-direction: column;
  justify-content: space-between;
  align-items: center;
  padding: 2px 0;
`

const HScroll = styled.div`
  display: flex;
  justify-content: space-between;
  align-items: center;
  padding: 0 2px;
`

const StatusBar = styled.footer`
  height: 25px;
  padding-right: 15px;
  border-top: 1px solid #a0a0a0;
  box-shadow: inset 0 1px #fff;
  color: #8a8a8a;
  font: 15px/17px 'Liberation Sans', sans-serif;
  text-align: right;
  text-shadow: 1px 1px #fff;
`
